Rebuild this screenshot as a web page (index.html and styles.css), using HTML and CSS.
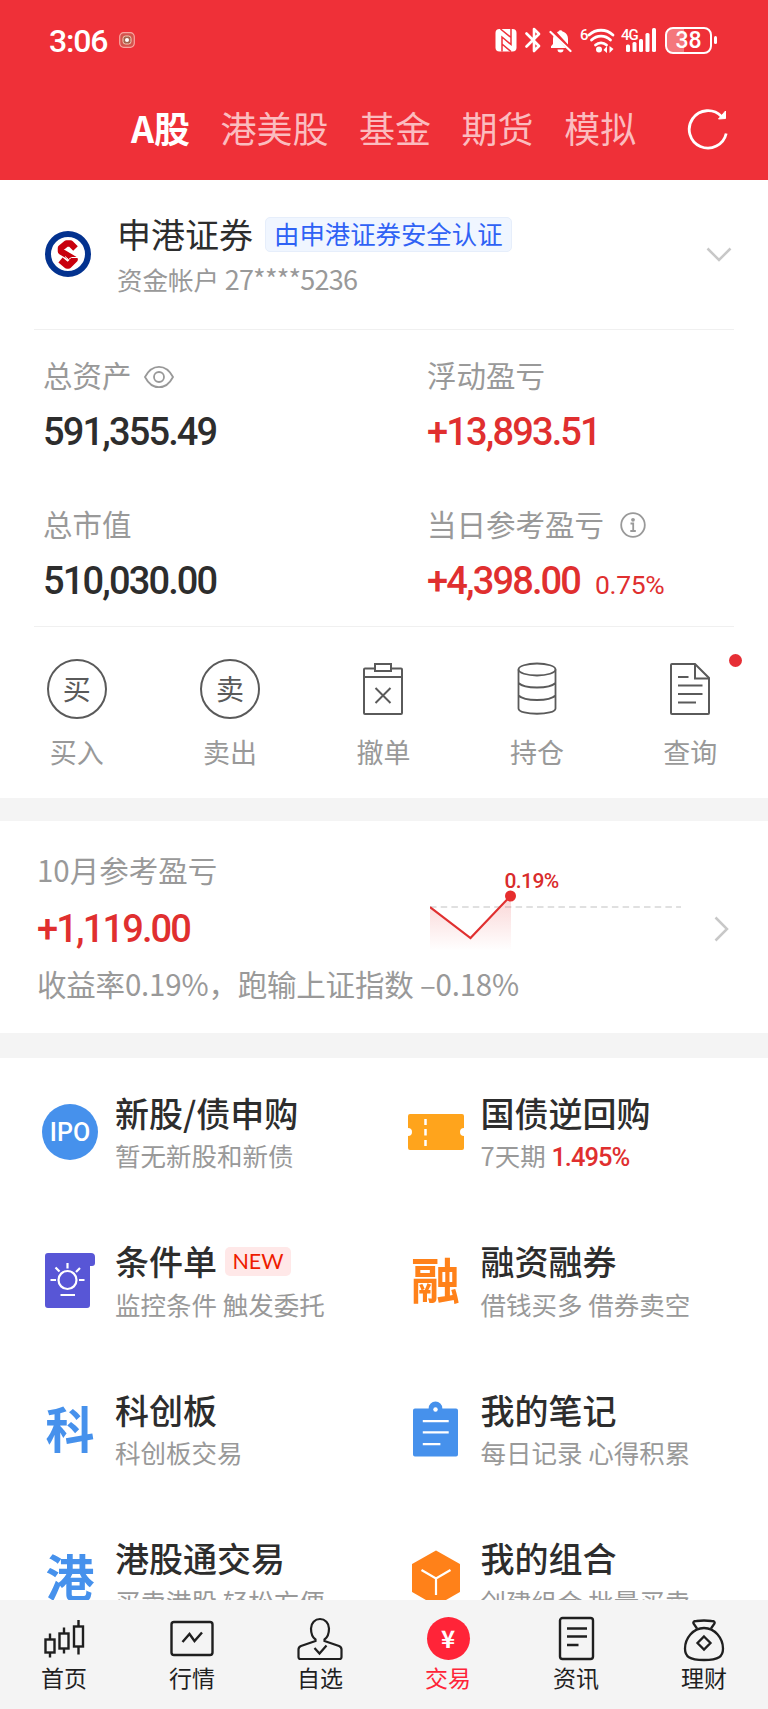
FILE: index.html
```
<!DOCTYPE html>
<html lang="zh-CN">
<head>
    <meta charset="UTF-8">
    <meta name="viewport" content="width=device-width, initial-scale=1.0">
    <title>交易</title>
    <link rel="stylesheet" href="styles.css">
</head>
<body>
    <header class="header">
        <div class="status">
            <span class="time">3:06</span>
            <svg class="rec" width="16" height="16" viewBox="0 0 16 16" fill="none">
                <rect x="0.7" y="0.7" width="14.6" height="14.6" rx="4" fill="#d5524c" stroke="#f9a49f" stroke-width="1.2"/>
                <rect x="4" y="4" width="8" height="8" rx="2.5" fill="#a5624d" stroke="#f3c9b4"/>
                <circle cx="8" cy="8" r="2" fill="#fff"/>
            </svg>
            <div class="status-icons">
                <svg width="22" height="24" viewBox="0 0 22 24">
                    <rect x="0.500" y="1" width="21" height="22.500" rx="4" fill="#fff"/>
                    <path d="M5.500 1L16 9.500M16 1v15.500L7 9v14.500M7 16l9 7.500" fill="none" stroke="#ef3038" stroke-width="1.500"/>
                </svg>
                <svg width="16" height="26" viewBox="0 0 16 26" fill="none" stroke="#fff" stroke-width="2.600" stroke-linejoin="round" stroke-linecap="round">
                    <path d="M1.500 6.500L14 19l-5 5V2l5 5L1.500 19.500"/>
                </svg>
                <svg width="23" height="25" viewBox="0 0 23 25">
                    <path d="M8 4.500A3 3 0 0 1 9.500 3.600a2.200 2.200 0 0 1 4 0C17.500 4.600 19 8 19 11v5.500z" fill="#fff"/>
                    <path d="M4.800 7.500L17 20H2v-1.800l2-2.200v-5q0-2 .8-3.500zM8.500 21.500h6a3 3 0 0 1-6 0z" fill="#fff"/>
                    <path d="M1.500 4l20 19" stroke="#fff" stroke-width="2.200" stroke-linecap="round"/>
                </svg>
                <svg class="wifi" width="36" height="27" viewBox="0 0 36 27" fill="none" stroke="#fff" stroke-width="2.800" stroke-linecap="round">
                    <text x="0" y="12.500" class="tiny">6</text>
                    <path d="M9 8a17.500 17.500 0 0 1 24 0M11.500 13a13.500 13.500 0 0 1 19 0M15.500 18a8 8 0 0 1 11 0"/>
                    <circle cx="19" cy="22.500" r="3" fill="#fff" stroke="none"/>
                    <path d="M23.500 23l3.500-4v7zM33.500 22l-4-3v7z" fill="#fff" stroke="none"/>
                </svg>
                <svg class="signal" width="36" height="26" viewBox="0 0 36 26">
                    <text x="0" y="12.500" class="tiny">4G</text>
                    <g fill="#fff">
                        <rect x="5" y="17.500" width="4" height="7.500" rx="1.500"/>
                        <rect x="11.500" y="15" width="4" height="10" rx="1.500"/>
                        <rect x="18" y="12" width="4" height="13" rx="1.500"/>
                        <rect x="24.500" y="6" width="4" height="19" rx="1.500"/>
                        <rect x="31" y="1" width="4" height="24" rx="1.500"/>
                    </g>
                </svg>
                <div class="battery"><span class="level">38</span></div>
            </div>
        </div>
        <nav class="tabs">
            <a class="tab active">A股</a>
            <a class="tab">港美股</a>
            <a class="tab">基金</a>
            <a class="tab">期货</a>
            <a class="tab">模拟</a>
            <svg class="refresh" width="42" height="42" viewBox="0 0 42 42" fill="none" stroke="#fff" stroke-width="2.800">
                <path d="M39.200 25.500A18.700 18.700 0 1 1 34.500 8.500"/>
                <path d="M31.500 11l7-.5V3z" fill="#fff" stroke-width="1"/>
            </svg>
        </nav>
    </header>

    <main class="main">
        <section class="account">
            <svg class="logo" width="46" height="46" viewBox="0 0 46 46">
                <circle cx="23" cy="23" r="20" fill="#fff" stroke="#03328f" stroke-width="6"/>
                <path d="M30.500 17.500l-5-5h-4L16 17v3.500l13.500 8-6 6h-1.500L15.500 29" fill="none" stroke="#c8000e" stroke-width="6.500" stroke-linejoin="round"/>
                <path d="M20 25.500l3.500 3 3-2H33" fill="none" stroke="#fff" stroke-width="1"/>
            </svg>
            <div class="account-info">
                <div class="account-name">申港证券<span class="cert">由申港证券安全认证</span></div>
                <div class="account-no">资金帐户 <span>27****5236</span></div>
            </div>
            <svg class="chevron" width="26" height="16" viewBox="0 0 26 16" fill="none" stroke="#c8c8c8" stroke-width="2.500"><path d="M1.500 1.500L13 13 24.500 1.500"/></svg>
        </section>

        <section class="assets">
            <div class="asset">
                <div class="label">总资产
                    <svg class="eye" width="30" height="24" viewBox="0 0 30 24" fill="none" stroke="#999" stroke-width="1.800">
                        <path d="M1 12C8-1.600 22-1.600 29 12 22 25.600 8 25.600 1 12z"/><circle cx="15" cy="12" r="5"/>
                    </svg>
                </div>
                <div class="value">591,355.49</div>
            </div>
            <div class="asset">
                <div class="label">浮动盈亏</div>
                <div class="value red">+13,893.51</div>
            </div>
            <div class="asset">
                <div class="label">总市值</div>
                <div class="value">510,030.00</div>
            </div>
            <div class="asset">
                <div class="label">当日参考盈亏
                    <svg class="info" width="26" height="26" viewBox="0 0 26 26" fill="none" stroke="#999" stroke-width="1.800">
                        <circle cx="13" cy="13" r="11.800"/><circle cx="13" cy="7.800" r="1.900" fill="#999" stroke="none"/><path d="M10.500 11.500h2.700v7.500M10.300 19h5.500"/>
                    </svg>
                </div>
                <div class="value red">+4,398.00<span class="rate">0.75%</span></div>
            </div>
        </section>

        <section class="actions">
            <a class="action"><span class="round">买</span>买入</a>
            <a class="action"><span class="round">卖</span>卖出</a>
            <a class="action">
                <svg width="60" height="60" viewBox="0 0 60 60" fill="none" stroke="#5a5a5a" stroke-width="2">
                    <path d="M22 9.500H12q-1 0-1 1V54q0 1 1 1h36q1 0 1-1V10.500q0-1-1-1H38M11 18h38"/><rect x="22" y="5" width="16" height="7"/><path d="M22.500 29l15 15M37.500 29l-15 15"/>
                </svg>撤单
            </a>
            <a class="action">
                <svg width="60" height="60" viewBox="0 0 60 60" fill="none" stroke="#5a5a5a" stroke-width="1.800">
                    <ellipse cx="30" cy="10.500" rx="18.500" ry="6"/><path d="M11.500 10.500v39c0 7 37 7 37 0v-39M11.500 24c6 6 31 6 37 0M11.500 36.500c6 6 31 6 37 0"/>
                </svg>持仓
            </a>
            <a class="action">
                <svg width="60" height="60" viewBox="0 0 60 60" fill="none" stroke="#5a5a5a" stroke-width="2">
                    <path d="M35 5H12q-1 0-1 1v48q0 1 1 1h36q1 0 1-1V19z"/><path d="M35 5v14.500h14M18 18h10.500M18 26.500h24.500M18 35h24.500M18 43.500h18"/>
                </svg>查询
                <i class="dot"></i>
            </a>
        </section>

        <section class="month">
            <div class="month-title">10月参考盈亏</div>
            <div class="value red month-value">+1,119.00</div>
            <svg class="chart" width="260" height="90" viewBox="0 0 260 90">
                <defs>
                    <linearGradient id="fade" x1="0" y1="0" x2="0" y2="1">
                        <stop offset="0" stop-color="#e62e2e" stop-opacity="0.2"/>
                        <stop offset="1" stop-color="#e62e2e" stop-opacity="0"/>
                    </linearGradient>
                </defs>
                <path d="M0 46H251" stroke="#e0e0e0" stroke-width="2" stroke-dasharray="6.500 4.200"/>
                <path d="M0 46l40.500 31L81 35v55H0z" fill="url(#fade)"/>
                <path d="M0 46l40.500 31L80.500 35" fill="none" stroke="#e03030" stroke-width="2.200"/>
                <circle cx="80.500" cy="35" r="5.500" fill="#e62e2e"/>
                <text x="74.500" y="27" class="chart-label">0.19%</text>
            </svg>
            <div class="month-text">收益率0.19%，跑输上证指数 –0.18%</div>
            <svg class="more" width="16" height="26" viewBox="0 0 16 26" fill="none" stroke="#c8c8c8" stroke-width="2.500"><path d="M1.500 1.500L13 13 1.500 24.500"/></svg>
        </section>

        <section class="services">
            <a class="service">
                <span class="icon"><span class="ipo">IPO</span></span>
                <div><div class="name">新股/债申购</div><div class="desc">暂无新股和新债</div></div>
            </a>
            <a class="service">
                <span class="icon">
                    <svg width="56" height="36" viewBox="0 0 56 36"><path d="M2 0h52q2 0 2 2v12a4 4 0 0 0 0 8v12q0 2-2 2H2q-2 0-2-2V22a4 4 0 0 0 0-8V2q0-2 2-2z" fill="#ffa41c"/><path d="M17.500 5v6M17.500 15v6.500M17.500 26v6" stroke="#fff" stroke-width="2.500"/></svg>
                </span>
                <div><div class="name">国债逆回购</div><div class="desc">7天期 <b>1.495%</b></div></div>
            </a>
            <a class="service">
                <span class="icon">
                    <svg width="50" height="55" viewBox="0 0 50 55"><path d="M3 0h43q4 0 4 4v6q0 3-3 3h-2v39q0 3-3 3H3q-3 0-3-3V3q0-3 3-3z" fill="#5856d6"/><g fill="none" stroke="#fff" stroke-width="2.200"><circle cx="22.500" cy="27" r="9"/><path d="M22.500 10v5.500M5.500 27H11M34 27h5.500M10.500 14.500l4 4M35 15l-4 4M15.500 42H30"/></g></svg>
                </span>
                <div><div class="name">条件单<span class="new">NEW</span></div><div class="desc">监控条件 触发委托</div></div>
            </a>
            <a class="service">
                <span class="icon glyph orange">融</span>
                <div><div class="name">融资融券</div><div class="desc">借钱买多 借券卖空</div></div>
            </a>
            <a class="service">
                <span class="icon glyph blue">科</span>
                <div><div class="name">科创板</div><div class="desc">科创板交易</div></div>
            </a>
            <a class="service">
                <span class="icon">
                    <svg width="45" height="56" viewBox="0 0 46 56"><path d="M2 7h14a7 7 0 0 1 14 0h14q2 0 2 2v45q0 2-2 2H2q-2 0-2-2V9q0-2 2-2z" fill="#4691ec"/><circle cx="23" cy="8" r="2.300" fill="#fff"/><path d="M10 20h26.500M10 31.500h26.500M10 43.500h18" stroke="#fff" stroke-width="2.200"/></svg>
                </span>
                <div><div class="name">我的笔记</div><div class="desc">每日记录 心得积累</div></div>
            </a>
            <a class="service">
                <span class="icon glyph blue">港</span>
                <div><div class="name">港股通交易</div><div class="desc">买卖港股 轻松方便</div></div>
            </a>
            <a class="service">
                <span class="icon">
                    <svg width="50" height="56" viewBox="0 0 50 56"><path d="M25 1.500L48 14.500v27L25 54.500 2 41.500v-27z" fill="#ff8119" stroke="#ff8119" stroke-width="2" stroke-linejoin="round"/><path d="M10.500 20L25 28.500 39.500 20M25 28.500V45" fill="none" stroke="#fff" stroke-width="2.200"/></svg>
                </span>
                <div><div class="name">我的组合</div><div class="desc">创建组合 批量买卖</div></div>
            </a>
        </section>
    </main>

    <footer class="nav">
        <a class="nav-item">
            <svg width="46" height="46" viewBox="0 0 46 46" fill="none" stroke="#1f1f1f" stroke-width="2.400">
                <rect x="4.500" y="23.500" width="9" height="13"/><rect x="18.500" y="17.500" width="9" height="15"/><rect x="33" y="10.500" width="9" height="20"/>
                <path d="M9 17.500v6M9 36.500v5M23 11.500v6M23 32.500v5M37.500 4v6.500M37.500 30.500v8"/>
            </svg>首页
        </a>
        <a class="nav-item">
            <svg width="46" height="46" viewBox="0 0 46 46" fill="none" stroke="#1f1f1f" stroke-width="2.400">
                <rect x="2.500" y="6" width="41" height="33" rx="2.500"/><path d="M13.500 26l7-8 5 7 7.500-8.500"/>
            </svg>行情
        </a>
        <a class="nav-item">
            <svg width="46" height="46" viewBox="0 0 46 46" fill="none" stroke="#1f1f1f" stroke-width="2.200">
                <path d="M18.500 23.500C15 21 14 17 14 12.500 14 7 18 3 23 3s9 4 9 9.500c0 4.500-1 8.500-4.500 11v1.500L42 30q2.500 1 2.500 3.500V41q0 2-2 2h-39q-2 0-2-2v-7.500Q1.500 31 4 30l14.500-5z"/><path d="M17.500 32l5 5.500 7-8"/>
            </svg>自选
        </a>
        <a class="nav-item current"><span class="yen">¥</span>交易</a>
        <a class="nav-item">
            <svg width="46" height="46" viewBox="0 0 46 46" fill="none" stroke="#1f1f1f" stroke-width="2.400">
                <rect x="7" y="2" width="33" height="41" rx="2.500"/><path d="M14 12.500h20M14 20.500h20M14 29H25.500"/>
            </svg>资讯
        </a>
        <a class="nav-item">
            <svg width="46" height="46" viewBox="0 0 46 46" fill="none" stroke="#1f1f1f" stroke-width="2.300">
                <path d="M16 12.500L12.500 7.500q-1-2.500 3-2.500 7.500-1 15 0 4 0 3 2.500L30 12.500"/><path d="M23 12C12 12 4 22.500 4 32.500c0 8 4 11.500 19 11.500s19-3.500 19-11.500C42 22.500 34 12 23 12z"/><path d="M23 20.500l6.500 6.500-6.500 6.500-6.500-6.500z"/>
            </svg>理财
        </a>
    </footer>
</body>
</html>
```
FILE: styles.css
```
* {
    box-sizing: border-box;
}
body {
    margin: 0;
    height: 100vh;
    display: flex;
    flex-direction: column;
    overflow: hidden;
    background-color: #fff;
    color: #2d2d2d;
    font-family: "Noto Sans CJK SC", sans-serif;
}
svg {
    display: block;
    flex-shrink: 0;
}

/* header */
.header {
    height: 180px;
    flex-shrink: 0;
    background-color: #ef3038;
    color: #fff;
}
.status {
    display: flex;
    align-items: center;
    height: 80px;
    padding: 0 51px 0 49px;
}
.time {
    font-family: Roboto, sans-serif;
    font-size: 32px;
    font-weight: 500;
    letter-spacing: -1.2px;
    line-height: 40px;
    padding-top: 2px;
}
.rec {
    margin-left: 12px;
}
.status-icons {
    display: flex;
    align-items: center;
    margin-left: auto;
}
.status-icons svg {
    margin-right: 8px;
}
.status-icons .wifi {
    margin-right: 5px;
}
.tiny {
    font-family: Roboto, sans-serif;
    font-size: 15px;
    font-weight: 500;
    letter-spacing: -1px;
    fill: #fff;
    stroke: none;
}
.battery {
    display: flex;
    align-items: center;
}
.battery::after {
    content: "";
    width: 3px;
    height: 8px;
    margin-left: 2px;
    border-radius: 2px;
    background-color: #fff;
}
.level {
    width: 47px;
    height: 27px;
    border: 2px solid #fff;
    border-radius: 8px;
    background: linear-gradient(to right, #f4777c 40%, transparent 40%);
    font-family: Roboto, sans-serif;
    font-size: 23px;
    font-weight: 500;
    line-height: 24px;
    text-align: center;
}
.tabs {
    display: flex;
    align-items: center;
    gap: 30.5px;
    height: 98px;
    padding: 0 39px 0 131px;
}
.tab {
    font-size: 36px;
    line-height: 48px;
    margin-top: -5px;
    color: #fbbcbf;
}
.tab.active {
    color: #fff;
    font-weight: 700;
}
.refresh {
    margin-left: auto;
}

.main {
    flex: 1;
    min-height: 0;
    overflow: hidden;
}

/* account */
.account {
    display: flex;
    align-items: center;
    height: 150px;
    margin: 0 34px;
    padding: 0 2px 0 11px;
    border-bottom: 1px solid #f0f0f0;
}
.logo {
    margin-top: -1px;
}
.account-info {
    flex: 1;
    margin-left: 26px;
}
.account-name {
    display: flex;
    align-items: center;
    height: 48px;
    font-size: 34px;
    line-height: 48px;
}
.cert {
    height: 35px;
    margin: 1px 0 0 12px;
    padding: 0 8px;
    border: 1px solid #e6eefb;
    border-radius: 5px;
    background-color: #f0f6ff;
    color: #2f62f5;
    font-size: 25.400px;
    line-height: 31px;
}
.account-no {
    height: 42px;
    font-size: 25.500px;
    line-height: 42px;
    color: #999;
}
.account-no span {
    font-size: 27px;
    letter-spacing: -0.8px;
}

/* assets */
.assets {
    display: grid;
    grid-template-columns: 384px 1fr;
    align-content: start;
    row-gap: 48.500px;
    height: 297px;
    margin: 0 34px;
    padding: 22px 0 0 9px;
    border-bottom: 1px solid #f0f0f0;
}
.asset {
    height: 100px;
}
.label {
    display: flex;
    align-items: center;
    height: 44px;
    margin-bottom: 14px;
    font-size: 29.500px;
    line-height: 44px;
    color: #999;
}
.eye {
    margin: 5px 0 0 12px;
}
.info {
    margin: 4px 0 0 16px;
}
.value {
    font-family: Roboto, sans-serif;
    font-size: 38px;
    font-weight: 500;
    line-height: 44px;
    letter-spacing: -1.850px;
    white-space: nowrap;
}
.red {
    color: #e02f2f;
}
.rate {
    margin-left: 15px;
    font-size: 26.500px;
    font-weight: 400;
    letter-spacing: -0.4px;
}

/* actions */
.actions {
    display: grid;
    grid-template-columns: repeat(5, 1fr);
    height: 171px;
    padding: 32px 1px 0 0;
}
.action {
    position: relative;
    display: flex;
    flex-direction: column;
    align-items: center;
    gap: 13px;
    font-size: 27px;
    line-height: 40px;
    color: #999;
}
.round {
    width: 60px;
    height: 60px;
    border: 2px solid #5a5a5a;
    border-radius: 50%;
    color: #5a5a5a;
    font-size: 28px;
    line-height: 54px;
    text-align: center;
}
.dot {
    position: absolute;
    top: -5px;
    right: 25px;
    width: 13px;
    height: 13px;
    border-radius: 50%;
    background-color: #e62e35;
}

/* monthly profit */
.month {
    display: grid;
    grid-template-columns: 393px 284px 1fr;
    grid-template-rows: 58px 44px 52px;
    height: 260px;
    padding: 28px 38px 0 37px;
    border-top: 23px solid #f4f4f4;
    border-bottom: 25px solid #f4f4f4;
    color: #999;
    font-size: 29.500px;
}
.month-title {
    line-height: 40px;
}
.month-value {
    grid-row: 2;
}
.chart {
    grid-column: 2;
    grid-row: 1 / 3;
    align-self: end;
}
.chart-label {
    font-family: Roboto, sans-serif;
    font-size: 21px;
    font-weight: 500;
    letter-spacing: -0.6px;
    fill: #d92b2b;
}
.month-text {
    grid-column: 1 / 3;
    grid-row: 3;
    padding-top: 12px;
    line-height: 40px;
    letter-spacing: -0.2px;
}
.more {
    grid-column: 3;
    grid-row: 1 / 4;
    align-self: center;
    margin-top: 5px;
}

/* services */
.services {
    display: grid;
    grid-template-columns: 365.500px 1fr;
    grid-auto-rows: 148.500px;
    padding-left: 42px;
}
.service {
    display: flex;
    align-items: center;
}
.icon {
    display: flex;
    align-items: center;
    justify-content: center;
    width: 56px;
    height: 56px;
    margin-right: 17px;
}
.ipo {
    width: 56px;
    height: 56px;
    border-radius: 50%;
    background-color: #4691ec;
    color: #fff;
    font-family: Roboto, sans-serif;
    font-size: 25px;
    font-weight: 500;
    line-height: 58px;
    text-align: center;
}
.glyph {
    font-size: 49px;
    font-weight: 700;
    line-height: 50px;
    padding-bottom: 5px;
}
.orange {
    color: #ff8119;
}
.blue {
    color: #4691ec;
}
.name {
    display: flex;
    align-items: center;
    height: 46px;
    padding-top: 1px;
    font-size: 34px;
    font-weight: 500;
    line-height: 46px;
}
.desc {
    height: 40px;
    font-size: 25.500px;
    line-height: 40px;
    color: #999;
}
.desc b {
    font-family: Roboto, sans-serif;
    font-weight: 500;
    letter-spacing: -1px;
    color: #e02f2f;
}
.new {
    width: 66px;
    height: 29px;
    margin: 1px 0 0 8px;
    border-radius: 5px;
    background-color: #ffe8e8;
    color: #ee1c00;
    font-family: Lato, sans-serif;
    font-size: 21.500px;
    font-weight: 400;
    line-height: 29px;
    text-align: center;
}

/* bottom navigation */
.nav {
    display: grid;
    grid-template-columns: repeat(6, 1fr);
    height: 109px;
    flex-shrink: 0;
    padding-top: 16px;
    background-color: #f4f4f4;
}
.nav-item {
    display: flex;
    flex-direction: column;
    align-items: center;
    font-size: 23px;
    line-height: 31px;
    color: #1f1f1f;
}
.current {
    color: #ff2438;
}
.yen {
    width: 43px;
    height: 43px;
    margin: 1px 0 2px;
    border-radius: 50%;
    background-color: #ff2438;
    color: #fff;
    font-size: 24px;
    font-weight: 700;
    line-height: 41px;
    text-align: center;
}
```
